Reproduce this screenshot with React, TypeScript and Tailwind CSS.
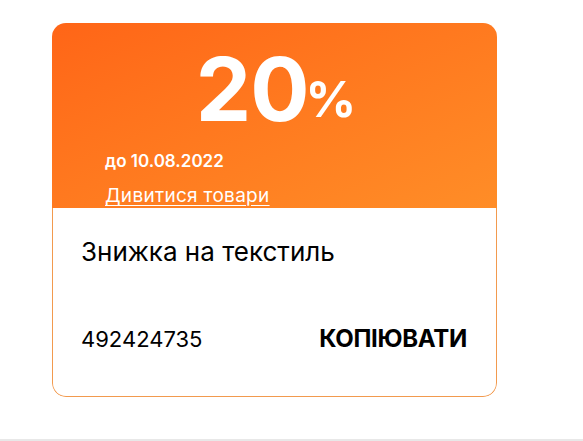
const Coupon = () => {
  return (
    <div className="ml-[52px] mt-[23px] w-[445px] rounded-[14px] overflow-hidden" style={{ fontFamily: "Inter, 'Noto Sans', sans-serif" }}>
      <div className="h-[185px] bg-gradient-to-br from-[#ff6517] to-[#ff8d27] text-white pl-[53px] pt-[22px]">
        <div className="flex items-baseline justify-center pr-[50px] leading-none">
          <span className="text-[88px] font-bold tracking-[-1px]">20</span>
          <span className="text-[50px] font-bold ml-[-3px] -translate-y-[4px]">%</span>
        </div>
        <div className="mt-[20px] text-[17px] font-semibold leading-none">до 10.08.2022</div>
        <a href="#" className="block mt-[16px] text-[19px] tracking-[0.3px] leading-none underline underline-offset-[3px]">
          Дивитися товари
        </a>
      </div>
      <div className="h-[189px] bg-white border border-t-0 border-[#f29a4e] rounded-b-[14px] pl-[28px] pr-[29px] pt-[31px] text-black">
        <div className="text-[26px] leading-none">Знижка на текстиль</div>
        <div className="flex items-center justify-between mt-[62px] text-[22px] leading-none">
          <span>492424735</span>
          <button className="font-bold text-[24px] tracking-[-0.3px]">КОПІЮВАТИ</button>
        </div>
      </div>
    </div>
  );
};

export default function App() {
  return (
    <div className="w-[583px] h-[441px] bg-white border-b-2 border-[#e8e8e8] overflow-hidden">
      <Coupon />
    </div>
  );
}
